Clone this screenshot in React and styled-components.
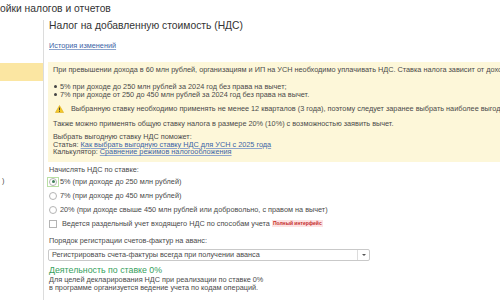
import React from 'react'
import styled, { createGlobalStyle } from 'styled-components'

const Global = createGlobalStyle`
  html, body {
    margin: 0;
    padding: 0;
    background: #fff;
    overflow: hidden;
  }
  body {
    font-family: "Liberation Sans", Arial, sans-serif;
    color: #4a4a4a;
  }
`

const Page = styled.div`
  width: 500px;
  height: 300px;
  overflow: hidden;
  display: flex;
  flex-direction: column;
`

const WindowTitle = styled.div`
  height: 20px;
  font-size: 10.3px;
  line-height: 18px;
  color: #333;
  white-space: nowrap;
`

const Body = styled.div`
  flex: 1;
  display: flex;
`

const Sidebar = styled.div`
  width: 43px;
  flex: none;
  border-right: 1px solid #dcdcdc;
  display: flex;
  flex-direction: column;
`

const SideItem = styled.div`
  height: ${p => p.h}px;
  background: ${p => (p.active ? '#fbe6a2' : 'transparent')};
  font-size: 7.3px;
  line-height: ${p => p.h}px;
  color: #4a4a4a;
  padding-left: 2px;
  white-space: nowrap;
`

const Main = styled.div`
  flex: 1;
  min-width: 0;
  padding-left: 5px;
  white-space: nowrap;
  font-size: 7.3px;
`

const Heading = styled.div`
  font-size: 10.3px;
  line-height: 12px;
  color: #333;
`

const Link = styled.a`
  color: #3c64a6;
  text-decoration: underline;
  text-decoration-color: #8ea5cc;
  cursor: pointer;
`

const HistoryRow = styled.div`
  margin-top: 9px;
  line-height: 9px;
`

const InfoBox = styled.div`
  margin-top: 12px;
  margin-left: -1px;
  width: 460px;
  background: #fdf7d9;
  padding: 3px 5px 6.25px;
`

const Line = styled.div`
  line-height: ${p => p.lh || 9}px;
  margin-top: ${p => p.mt || 0}px;
  display: flex;
  align-items: center;
`

const Bullet = styled.span`
  width: 3px;
  height: 3px;
  border-radius: 50%;
  background: #444;
  margin: 0 3px 0 1px;
`

const Warn = styled.svg`
  width: 9px;
  height: 8px;
  margin: 0 7px 0 2px;
  flex: none;
`

const Label = styled.div`
  margin-top: ${p => p.mt || 0}px;
  line-height: 10px;
`

const Option = styled.label`
  display: flex;
  align-items: center;
  height: 14px;
`

const RadioBox = styled.span`
  width: 12px;
  height: 10px;
  flex: none;
  display: flex;
  align-items: center;
  justify-content: center;
  margin-right: 1px;
  border: 1px solid ${p => (p.focused ? '#b9dfa4' : 'transparent')};
  box-sizing: border-box;
  margin-left: -2px;
`

const Radio = styled.span`
  width: 8px;
  height: 8px;
  border-radius: 50%;
  border: 1px solid #b4b4b4;
  box-sizing: border-box;
  background: #fff;
  display: flex;
  align-items: center;
  justify-content: center;
  &::after {
    content: '';
    width: 3px;
    height: 3px;
    border-radius: 50%;
    background: ${p => (p.checked ? '#3f7f5a' : 'transparent')};
  }
`

const Check = styled.span`
  width: 8px;
  height: 8px;
  border: 1px solid #b4b4b4;
  box-sizing: border-box;
  margin-right: 5px;
  flex: none;
`

const Badge = styled.span`
  margin-left: 2px;
  padding: 0 1px;
  background: #fde3e3;
  color: #c42b2b;
  font-size: 5px;
  font-weight: bold;
  line-height: 7px;
`

const Select = styled.div`
  margin-top: 3px;
  width: 322px;
  height: 12px;
  margin-left: -1px;
  border: 1px solid #c9c9c9;
  border-radius: 2px;
  box-sizing: border-box;
  display: flex;
  align-items: center;
  background: #fff;
`

const SelectText = styled.span`
  flex: 1;
  padding-left: 3px;
  line-height: 10px;
`

const SelectBtn = styled.span`
  width: 11px;
  height: 10px;
  border-left: 1px solid #dcdcdc;
  display: flex;
  align-items: center;
  justify-content: center;
  &::after {
    content: '';
    border-left: 2px solid transparent;
    border-right: 2px solid transparent;
    border-top: 2px solid #555;
  }
`

const GreenTitle = styled.div`
  margin-top: 4.5px;
  color: #35a05c;
  font-size: 8.8px;
  line-height: 11px;
`

const Para = styled.div`
  line-height: 7.5px;
`

export default function App() {
  return (
    <Page>
      <Global />
      <WindowTitle>ойки налогов и отчетов</WindowTitle>
      <Body>
        <Sidebar>
          <SideItem h={43} />
          <SideItem h={18} active />
          <SideItem h={95} />
          <SideItem h={10}>)</SideItem>
        </Sidebar>
        <Main>
          <Heading>Налог на добавленную стоимость (НДС)</Heading>
          <HistoryRow>
            <Link>История изменений</Link>
          </HistoryRow>
          <InfoBox>
            <Line lh={10}>
              При превышении дохода в 60 млн рублей, организациям и ИП на УСН необходимо уплачивать НДС. Ставка налога зависит от дохода
            </Line>
            <Line lh={7.5} mt={8}>
              <Bullet />5% при доходе до 250 млн рублей за 2024 год без права на вычет;
            </Line>
            <Line lh={7.5}>
              <Bullet />7% при доходе от 250 до 450 млн рублей за 2024 год без права на вычет.
            </Line>
            <Line lh={10} mt={5.5}>
              <Warn viewBox="0 0 18 16">
                <path d="M9 1 L17.2 15 H0.8 Z" fill="#f3c928" stroke="#d7a20f" strokeWidth="1" strokeLinejoin="round" />
                <rect x="8.1" y="5" width="1.8" height="5.5" fill="#333" />
                <rect x="8.1" y="11.8" width="1.8" height="1.8" fill="#333" />
              </Warn>
              Выбранную ставку необходимо применять не менее 12 кварталов (3 года), поэтому следует заранее выбрать наиболее выгодную
            </Line>
            <Line lh={10} mt={5.5}>
              Также можно применять общую ставку налога в размере 20% (10%) с возможностью заявить вычет.
            </Line>
            <Line lh={7.5} mt={4.25}>Выбрать выгодную ставку НДС поможет:</Line>
            <Line lh={7.5}>
              Статья:&nbsp;<Link>Как выбрать выгодную ставку НДС для УСН с 2025 года</Link>
            </Line>
            <Line lh={7.5}>
              Калькулятор:&nbsp;<Link>Сравнение режимов налогообложения</Link>
            </Line>
          </InfoBox>
          <Label mt={2.5}>Начислять НДС по ставке:</Label>
          <Option>
            <RadioBox focused>
              <Radio checked />
            </RadioBox>
            5% (при доходе до 250 млн рублей)
          </Option>
          <Option>
            <RadioBox>
              <Radio />
            </RadioBox>
            7% (при доходе до 450 млн рублей)
          </Option>
          <Option>
            <RadioBox>
              <Radio />
            </RadioBox>
            20% (при доходе свыше 450 млн рублей или добровольно, с правом на вычет)
          </Option>
          <Option>
            <Check />
            Ведется раздельный учет входящего НДС по способам учета
            <Badge>Полный интерфейс</Badge>
          </Option>
          <Label mt={5}>Порядок регистрации счетов-фактур на аванс:</Label>
          <Select>
            <SelectText>Регистрировать счета-фактуры всегда при получении аванса</SelectText>
            <SelectBtn />
          </Select>
          <GreenTitle>Деятельность по ставке 0%</GreenTitle>
          <Para>Для целей декларирования НДС при реализации по ставке 0%</Para>
          <Para>в программе организуется ведение учета по кодам операций.</Para>
        </Main>
      </Body>
    </Page>
  )
}
